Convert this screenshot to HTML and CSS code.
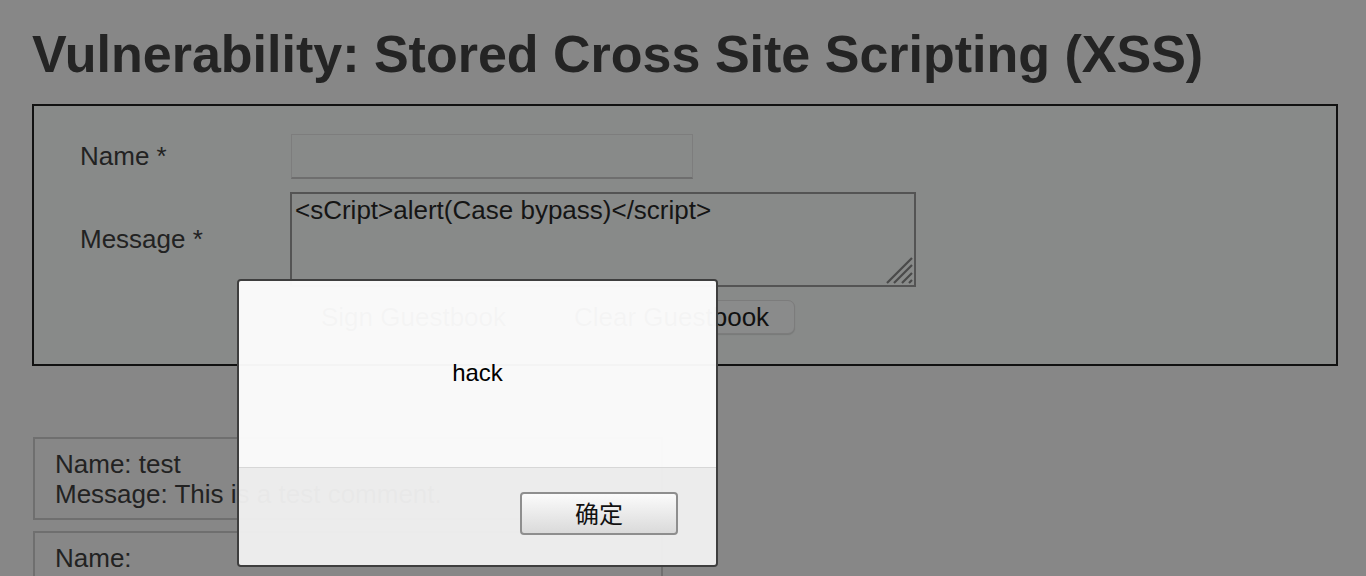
FILE: index.html
```html
<!DOCTYPE html>
<html lang="en">
<head>
<meta charset="utf-8">
<title>Vulnerability: Stored Cross Site Scripting (XSS)</title>
<link rel="stylesheet" href="styles.css">
</head>
<body>
<div class="page">
  <h1 class="title">Vulnerability: Stored Cross Site Scripting (XSS)</h1>
  <div class="code-area">
    <form class="gb-form">
      <label class="lbl" for="txtName">Name *</label>
      <input class="name-input" id="txtName" type="text">
      <label class="lbl" for="mtxMessage">Message *</label>
      <div class="ta-wrap">
        <textarea class="msg-input" id="mtxMessage">&lt;sCript&gt;alert(Case bypass)&lt;/script&gt;</textarea>
        <svg class="grip" width="28" height="28" viewBox="0 0 28 28">
          <path d="M2 27 L27 2 M9 27 L27 9 M17 27 L27 17 M24 27 L27 24" stroke="#4a4a4a" stroke-width="2.2" fill="none"/>
        </svg>
      </div>
      <div class="btn-row">
        <button type="button" class="pg-btn">Sign Guestbook</button>
        <button type="button" class="pg-btn">Clear Guestbook</button>
      </div>
    </form>
  </div>
  <div class="entries">
    <div class="entry">Name: test<br>Message: This is a test comment.</div>
    <div class="entry entry-tall">Name: </div>
  </div>
</div>

<div class="dialog" role="alertdialog">
  <div class="dlg-body">hack</div>
  <div class="dlg-foot">
    <button type="button" class="ok-btn">确定</button>
  </div>
</div>
</body>
</html>
```

FILE: styles.css
```css
html, body {
  margin: 0;
  padding: 0;
  height: 100%;
  overflow: hidden;
}
body {
  background: #878787;
  font-family: "Liberation Sans", Arial, sans-serif;
  color: #1e1e1e;
}
.page {
  padding-left: 32px;
  width: 1306px;
}
.title {
  margin: 0;
  padding-top: 24px;
  font-size: 52px;
  line-height: 60px;
  font-weight: bold;
  color: #242424;
}
.code-area {
  margin-top: 20px;
  height: 262px;
  box-sizing: border-box;
  border: 2px solid #111111;
  background: #888a89;
  padding: 28px 0 0 46px;
}
.gb-form {
  display: grid;
  grid-template-columns: 211px auto;
  row-gap: 13px;
  align-items: center;
  justify-items: start;
}
.lbl {
  font-size: 26px;
  line-height: 30px;
  color: #222;
  margin-top: -1px;
}
.name-input {
  box-sizing: border-box;
  width: 402px;
  height: 45px;
  margin: 0;
  border: 1px solid #7d7d7d;
  border-bottom: 2px solid #6e6e6e;
  background: #888a89;
  outline: none;
}
.ta-wrap {
  position: relative;
  margin-left: -1px;
  width: 626px;
  height: 95px;
}
.msg-input {
  display: block;
  box-sizing: border-box;
  width: 626px;
  height: 95px;
  margin: 0;
  padding: 1px 3px;
  border: 2px solid #545454;
  background: #888a89;
  font-family: "Liberation Sans", Arial, sans-serif;
  font-size: 26px;
  line-height: 30px;
  color: #151515;
  resize: none;
  outline: none;
}
.grip {
  position: absolute;
  right: 3px;
  bottom: 3px;
}
.btn-row {
  grid-column: 2;
  display: flex;
  gap: 16px;
  height: 34px;
  margin-left: 4px;
}
.pg-btn {
  box-sizing: border-box;
  height: 34px;
  padding: 0 25px 0 25px;
  border: 1px solid #7c7c7c;
  border-radius: 7px;
  background: #8a8b8b;
  box-shadow: 0 1px 1px rgba(0,0,0,0.12);
  font-family: "Liberation Sans", Arial, sans-serif;
  font-size: 26px;
  line-height: 32px;
  color: #111;
}
.entries {
  margin-top: 71px;
  margin-left: 1px;
  display: flex;
  flex-direction: column;
  gap: 11px;
}
.entry {
  box-sizing: border-box;
  width: 630px;
  border: 2px solid #6f6f6f;
  padding: 10px 20px 9px 20px;
  font-size: 26px;
  line-height: 30px;
  color: #222;
}
.entry-tall {
  min-height: 83px;
}

/* modal alert */
.dialog {
  position: absolute;
  left: 237px;
  top: 279px;
  width: 481px;
  height: 288px;
  box-sizing: border-box;
  border: 2px solid #3e3e3e;
  border-radius: 4px;
  overflow: hidden;
  display: flex;
  flex-direction: column;
}
.dlg-body {
  height: 186px;
  display: flex;
  align-items: center;
  justify-content: center;
  background: rgba(254,254,254,0.96);
  font-size: 24px;
  color: #000;
  padding-bottom: 2px;
  box-sizing: border-box;
}
.dlg-foot {
  flex: 1;
  border-top: 1px solid rgba(214,214,214,0.97);
  background: rgba(240,240,240,0.96);
  display: flex;
  justify-content: flex-end;
  align-items: flex-start;
  padding: 24px 38px 0 0;
}
.ok-btn {
  box-sizing: border-box;
  width: 158px;
  height: 43px;
  border: 2px solid #8e8e8e;
  border-radius: 4px;
  background: linear-gradient(#fbfbfb, #dadada);
  font-family: "Liberation Sans", "Noto Sans CJK SC", sans-serif;
  font-size: 24px;
  color: #111;
  padding: 0 0 2px 0;
}
```
